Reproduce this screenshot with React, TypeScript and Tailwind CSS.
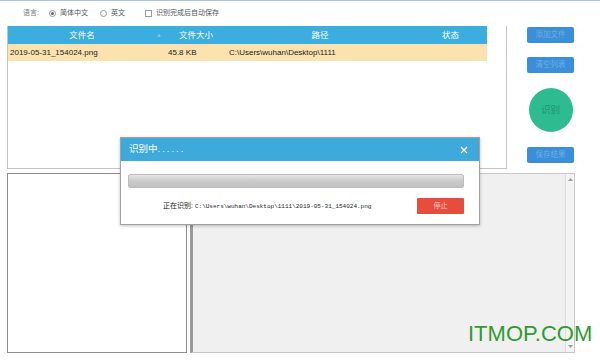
const cjk = { fontFamily: '"Liberation Sans", "Noto Sans CJK SC", sans-serif' };

function Radio({ on }: { on?: boolean }) {
	return (
		<span className="w-[7px] h-[7px] rounded-full border border-[#9a9a9a] bg-white flex items-center justify-center">
			{on && <span className="w-[3px] h-[3px] rounded-full bg-[#666]" />}
		</span>
	);
}

function SideButton({ label }: { label: string }) {
	return (
		<button className="w-[47px] h-[16px] rounded-[2px] bg-[#3b8fd8] text-[7.5px] text-[#6eaee6] flex items-center justify-center">
			{label}
		</button>
	);
}

export default function App() {
	return (
		<div className="relative w-[600px] h-[360px] bg-white border-t border-[#a8c4e6] overflow-hidden" style={cjk}>
			{/* language bar */}
			<div className="flex items-center h-[25px] pl-[23px] text-[7px] text-[#777]">
				<span>语言:</span>
				<span className="ml-[10px]"><Radio on /></span>
				<span className="ml-[4px] text-[#555]">简体中文</span>
				<span className="ml-[12px]"><Radio /></span>
				<span className="ml-[4px] text-[#555]">英文</span>
				<span className="ml-[20px] w-[7px] h-[7px] border border-[#9a9a9a] bg-white" />
				<span className="ml-[4px] text-[#555]">识别完成后自动保存</span>
			</div>

			<div className="flex h-[147px]">
				{/* file list */}
				<div className="ml-[7px] w-[500px] h-[143px] border border-[#c4c4c4] border-t-0">
					<div className="flex w-[479px] h-[18px] bg-[#3badde] text-white text-[8.5px] items-center">
						<span className="w-[148px] text-center">文件名</span>
						<span className="w-[10px] text-[6px] text-[#7cc8ea]">▲</span>
						<span className="w-[60px] text-center">文件大小</span>
						<span className="w-[188px] text-center">路径</span>
						<span className="w-[73px] text-center">状态</span>
					</div>
					<div className="flex w-[479px] h-[17px] bg-[#fce2ae] text-[#222] text-[8px] items-center">
						<span className="w-[158px] pl-[2px]">2019-05-31_154024.png</span>
						<span className="w-[60px] pl-[2px]">45.8 KB</span>
						<span className="pl-[3px]">C:\Users\wuhan\Desktop\1111</span>
					</div>
				</div>

				{/* side buttons */}
				<div className="ml-[20px] w-[47px] flex flex-col items-center pt-[1px]">
					<SideButton label="添加文件" />
					<div className="mt-[14px]"><SideButton label="清空列表" /></div>
					<button className="mt-[15px] w-[44px] h-[44px] rounded-full bg-[#2dbb8f] text-[9.5px] text-[#1d9870] flex items-center justify-center">
						识别
					</button>
					<div className="mt-[15px]"><SideButton label="保存结果" /></div>
				</div>
			</div>

			{/* bottom panes */}
			<div className="flex ml-[7px] h-[180px]">
				<div className="w-[180px] h-[180px] border border-[#8c8c8c] bg-white" />
				<div className="ml-[3px] w-[385px] h-[180px] flex border border-[#c8c8c8] border-l-[3px] border-l-[#9a9a9a] bg-[#f0f0f0]">
					<div className="flex-1" />
					<div className="w-[9px] h-full bg-[#f4f4f4] border-l border-[#dcdcdc] flex flex-col items-center justify-between py-[4px]">
						<svg width="5" height="3" viewBox="0 0 5 3"><path d="M0 3 L2.5 0 L5 3 Z" fill="#999" /></svg>
						<svg width="5" height="3" viewBox="0 0 5 3"><path d="M0 0 L2.5 3 L5 0 Z" fill="#999" /></svg>
					</div>
				</div>
			</div>

			{/* progress dialog */}
			<div className="absolute left-[120px] top-[136px] w-[360px] h-[88px] border border-[#a0a0a0] bg-white shadow-[0_1px_3px_rgba(0,0,0,0.25)]">
				<div className="h-[23px] bg-[#3eaadc] flex items-center justify-between pl-[8px] pr-[11px] text-white">
					<span className="text-[9.5px]">识别中<span className="tracking-[2px]">......</span></span>
					<svg width="8" height="8" viewBox="0 0 8 8">
						<path d="M1 1 L7 7 M7 1 L1 7" stroke="white" strokeWidth="1.4" />
					</svg>
				</div>
				<div className="mt-[13px] ml-[7px] w-[336px] h-[14px] border border-[#bdbdbd] rounded-[2px] bg-gradient-to-b from-[#e6e6e6] via-[#cacaca] to-[#c2c2c2]" />
				<div className="flex items-center mt-[10px] h-[16px]">
					<span className="ml-[42px] text-[7px] text-[#222]">正在识别:</span>
					<span className="ml-[2px] text-[6px] text-[#222]" style={{ fontFamily: '"Liberation Mono", monospace' }}>
						C:\Users\wuhan\Desktop\1111\2019-05-31_154024.png
					</span>
					<button className="ml-auto mr-[15px] w-[47px] h-[16px] bg-[#e74c3c] rounded-[1px] text-[7px] text-[#fbd4cf] flex items-center justify-center">
						停止
					</button>
				</div>
			</div>

			{/* watermark */}
			<div className="absolute left-[468px] top-[322px] text-[22px] leading-none text-[#2f9b2f]" style={{ fontFamily: '"Liberation Sans", Arial, sans-serif' }}>
				ITMOP.COM
			</div>
		</div>
	);
}
